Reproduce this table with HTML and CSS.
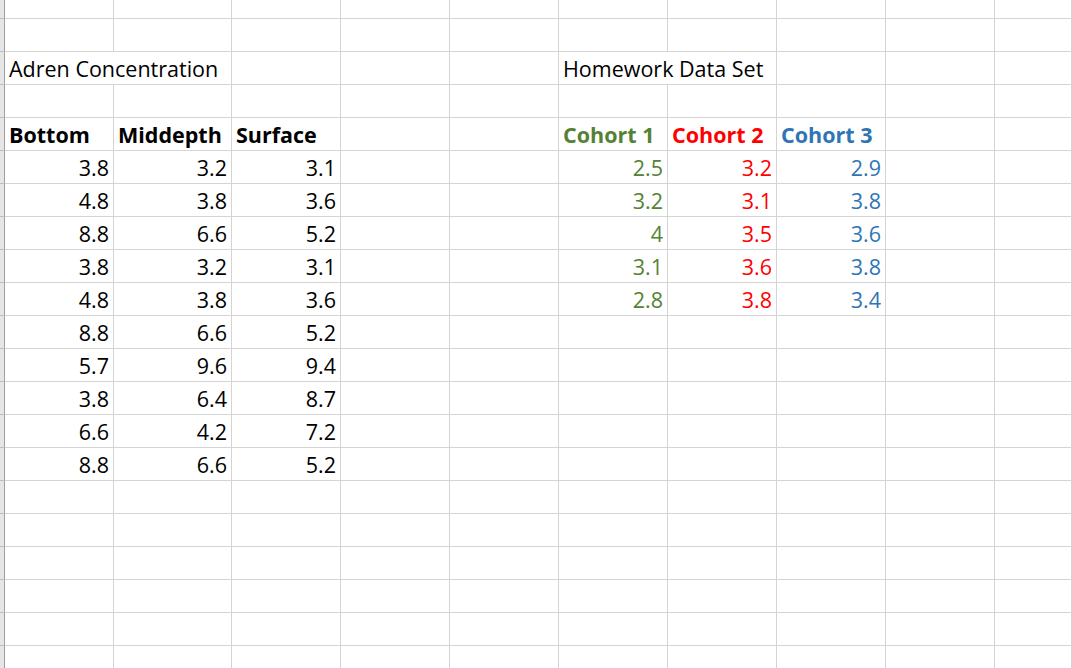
FILE: index.html
```html
<!DOCTYPE html>
<html>
<head>
<meta charset="utf-8">
<title>Sheet</title>
<link rel="stylesheet" href="styles.css">
</head>
<body>
<table class="sheet">
<colgroup>
<col class="w-rh"><col class="w-a"><col class="w-b"><col class="w-c"><col class="w-c"><col class="w-c"><col class="w-c"><col class="w-c"><col class="w-c"><col class="w-c"><col class="w-last">
</colgroup>
<tbody>
<tr class="first"><td class="rh"></td><td></td><td></td><td></td><td></td><td></td><td></td><td></td><td></td><td></td><td></td></tr>
<tr><td class="rh"></td><td></td><td></td><td></td><td></td><td></td><td></td><td></td><td></td><td></td><td></td></tr>
<tr><td class="rh"></td><td colspan="2">Adren Concentration</td><td></td><td></td><td></td><td colspan="2">Homework Data Set</td><td></td><td></td><td></td></tr>
<tr><td class="rh"></td><td></td><td></td><td></td><td></td><td></td><td></td><td></td><td></td><td></td><td></td></tr>
<tr class="head"><td class="rh"></td><td>Bottom</td><td>Middepth</td><td>Surface</td><td></td><td></td><td class="green">Cohort 1</td><td class="red">Cohort 2</td><td class="blue">Cohort 3</td><td></td><td></td></tr>
<tr class="num"><td class="rh"></td><td>3.8</td><td>3.2</td><td>3.1</td><td></td><td></td><td class="green">2.5</td><td class="red">3.2</td><td class="blue">2.9</td><td></td><td></td></tr>
<tr class="num"><td class="rh"></td><td>4.8</td><td>3.8</td><td>3.6</td><td></td><td></td><td class="green">3.2</td><td class="red">3.1</td><td class="blue">3.8</td><td></td><td></td></tr>
<tr class="num"><td class="rh"></td><td>8.8</td><td>6.6</td><td>5.2</td><td></td><td></td><td class="green">4</td><td class="red">3.5</td><td class="blue">3.6</td><td></td><td></td></tr>
<tr class="num"><td class="rh"></td><td>3.8</td><td>3.2</td><td>3.1</td><td></td><td></td><td class="green">3.1</td><td class="red">3.6</td><td class="blue">3.8</td><td></td><td></td></tr>
<tr class="num"><td class="rh"></td><td>4.8</td><td>3.8</td><td>3.6</td><td></td><td></td><td class="green">2.8</td><td class="red">3.8</td><td class="blue">3.4</td><td></td><td></td></tr>
<tr class="num"><td class="rh"></td><td>8.8</td><td>6.6</td><td>5.2</td><td></td><td></td><td></td><td></td><td></td><td></td><td></td></tr>
<tr class="num"><td class="rh"></td><td>5.7</td><td>9.6</td><td>9.4</td><td></td><td></td><td></td><td></td><td></td><td></td><td></td></tr>
<tr class="num"><td class="rh"></td><td>3.8</td><td>6.4</td><td>8.7</td><td></td><td></td><td></td><td></td><td></td><td></td><td></td></tr>
<tr class="num"><td class="rh"></td><td>6.6</td><td>4.2</td><td>7.2</td><td></td><td></td><td></td><td></td><td></td><td></td><td></td></tr>
<tr class="num"><td class="rh"></td><td>8.8</td><td>6.6</td><td>5.2</td><td></td><td></td><td></td><td></td><td></td><td></td><td></td></tr>
<tr><td class="rh"></td><td></td><td></td><td></td><td></td><td></td><td></td><td></td><td></td><td></td><td></td></tr>
<tr><td class="rh"></td><td></td><td></td><td></td><td></td><td></td><td></td><td></td><td></td><td></td><td></td></tr>
<tr><td class="rh"></td><td></td><td></td><td></td><td></td><td></td><td></td><td></td><td></td><td></td><td></td></tr>
<tr><td class="rh"></td><td></td><td></td><td></td><td></td><td></td><td></td><td></td><td></td><td></td><td></td></tr>
<tr><td class="rh"></td><td></td><td></td><td></td><td></td><td></td><td></td><td></td><td></td><td></td><td></td></tr>
<tr><td class="rh"></td><td></td><td></td><td></td><td></td><td></td><td></td><td></td><td></td><td></td><td></td></tr>
</tbody>
</table>
</body>
</html>
```
FILE: styles.css
```css
html, body {
  margin: 0;
  padding: 0;
  background: #ffffff;
  overflow: hidden;
}

body {
  width: 1072px;
  height: 668px;
  font-family: "Open Sans", Lato, "Liberation Sans", sans-serif;
  font-size: 21.5px;
  color: #000000;
}

.sheet {
  border-collapse: separate;
  border-spacing: 0;
  table-layout: fixed;
  width: 1072px;
}

.w-rh { width: 5px; }
.w-a { width: 109px; }
.w-b { width: 118px; }
.w-c { width: 109px; }
.w-last { width: 77px; }

.sheet tr { height: 33px; }
.sheet tr.first { height: 19px; }

.sheet td {
  box-sizing: border-box;
  padding: 0 4px 3px 4px;
  border-right: 1px solid #d4d4d4;
  border-bottom: 1px solid #d4d4d4;
  vertical-align: bottom;
  white-space: nowrap;
  line-height: 24px;
  overflow: visible;
}

.sheet td.rh {
  padding: 0;
  background: #e6e6e6;
  border-right: 1px solid #9e9e9e;
  border-bottom: 1px solid #bdbdbd;
}

.head td { font-weight: bold; }
.num td { text-align: right; }

.green { color: #548235; }
.red { color: #ff0000; }
.blue { color: #2e75b6; }
```
